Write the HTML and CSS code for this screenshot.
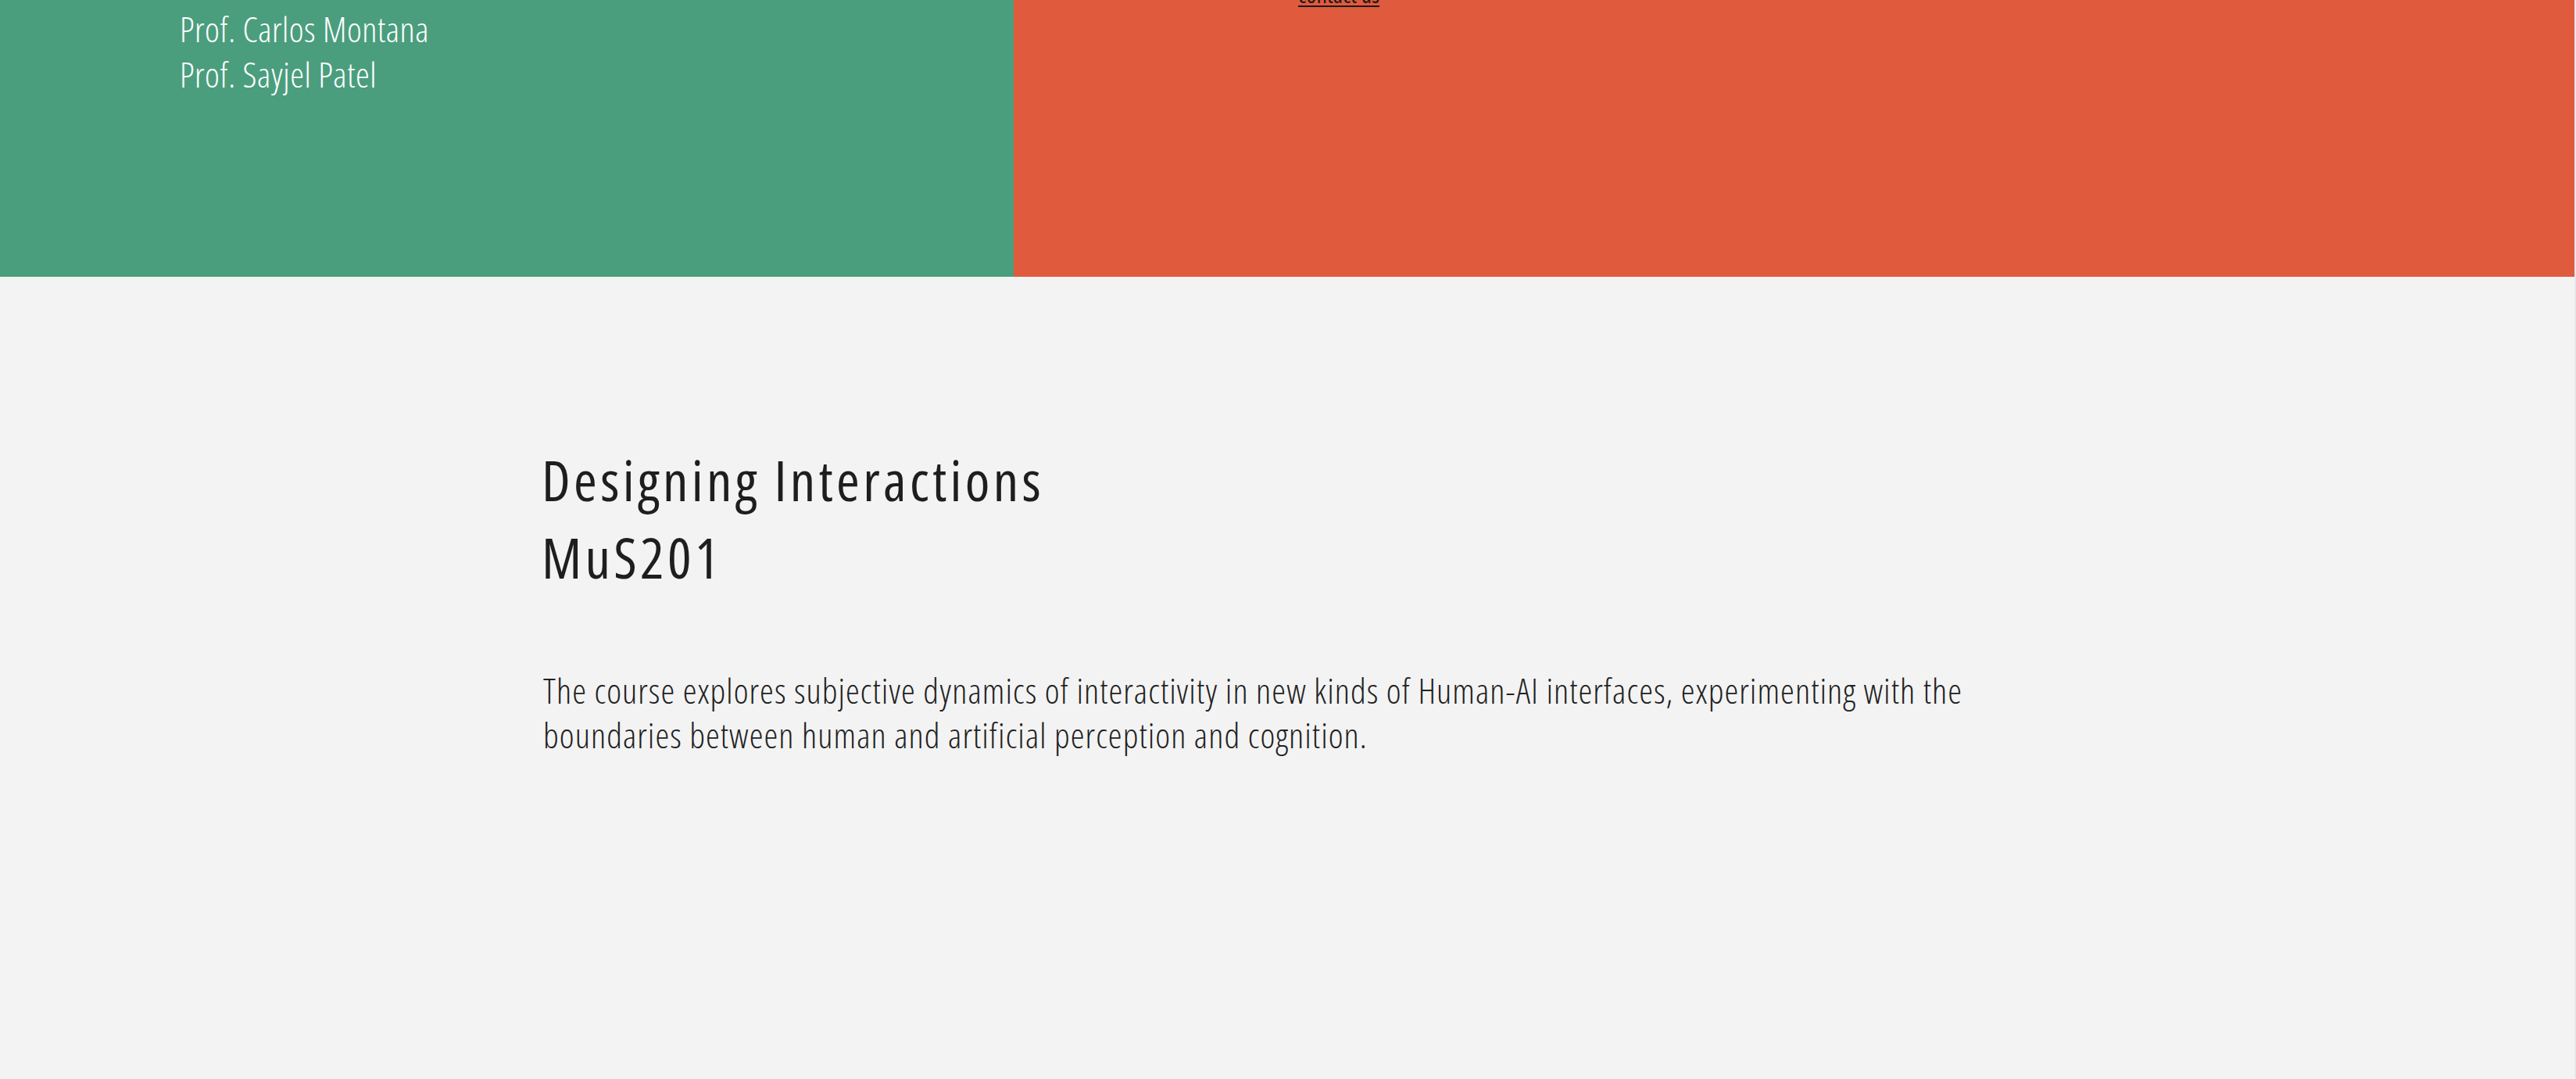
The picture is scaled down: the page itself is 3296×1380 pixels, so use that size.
FILE: index.html
```html
<!DOCTYPE html>
<html lang="en">
<head>
<meta charset="utf-8">
<title>Designing Interactions MuS201</title>
<link rel="stylesheet" href="styles.css">
</head>
<body>
<div class="page">
  <header class="hero">
    <div class="hero-people">
      <p class="prof">Prof. Carlos Montana</p>
      <p class="prof">Prof. Sayjel Patel</p>
    </div>
    <div class="hero-side">
      <a class="contact" href="#">contact us</a>
    </div>
  </header>
  <main class="intro">
    <h1 class="title">Designing Interactions<br>MuS201</h1>
    <p class="lead">The course explores subjective dynamics of interactivity in new kinds of Human-AI interfaces, experimenting with the boundaries between human and artificial perception and cognition.</p>
  </main>
</div>
</body>
</html>
```
FILE: styles.css
```css
html, body {
  margin: 0;
  padding: 0;
}
body {
  background: #f3f3f3;
  font-family: "Open Sans", "Liberation Sans", sans-serif;
  font-stretch: 75%;
  color: #222222;
  height: 1380px;
  overflow: hidden;
  border-right: 2px solid #e8e8e8;
  box-sizing: border-box;
}
.page {
  display: flex;
  flex-direction: column;
}
.hero {
  display: flex;
  height: 354px;
}
.hero-people {
  width: 1297px;
  flex: none;
  background: #4a9e7e;
  padding: 8px 0 0 230px;
  box-sizing: border-box;
}
.prof {
  margin: 0;
  color: #ffffff;
  font-size: 45px;
  font-weight: 300;
  line-height: 58px;
  letter-spacing: 0.5px;
}
.hero-side {
  flex: 1;
  background: #e05a3d;
  padding-left: 364px;
}
.contact {
  display: block;
  width: max-content;
  margin-top: -27px;
  font-size: 30px;
  line-height: 40px;
  color: #1a1a1a;
  text-decoration: underline;
  text-decoration-thickness: 2px;
  text-underline-offset: 3px;
}
.intro {
  padding: 0 0 0 693px;
  width: 1880px;
}
.title {
  margin: 210px 0 0 0;
  font-size: 72px;
  font-weight: 520;
  line-height: 99px;
  letter-spacing: 4.3px;
  color: #1e1e1e;
}
.lead {
  margin: 92px 0 0 2px;
  font-size: 45px;
  font-weight: 300;
  line-height: 57px;
  letter-spacing: 1.05px;
  color: #222222;
}
```
